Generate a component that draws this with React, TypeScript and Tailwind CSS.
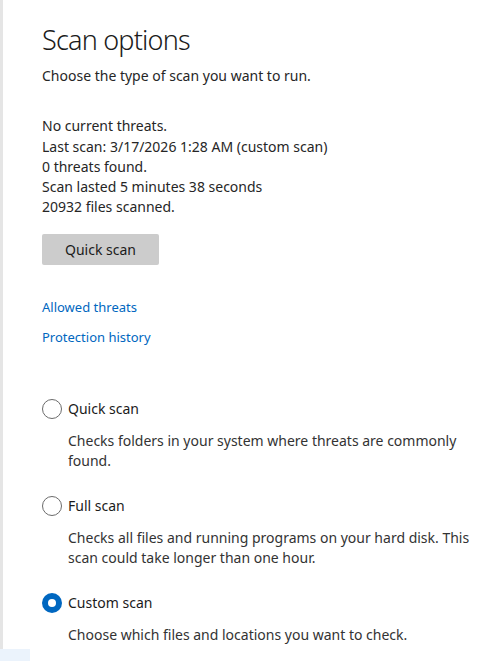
import React from "react";

function Radio({ checked }: { checked?: boolean }) {
  return checked ? (
    <span className="flex h-5 w-5 shrink-0 items-center justify-center rounded-full bg-[#0067c0]">
      <span className="h-2 w-2 rounded-full bg-white" />
    </span>
  ) : (
    <span className="h-5 w-5 shrink-0 rounded-full border border-[#6b6b6b] bg-white" />
  );
}

function Option({ label, desc, checked }: { label: string; desc: string; checked?: boolean }) {
  return (
    <div className="flex flex-col">
      <div className="flex items-center gap-[6px] h-5">
        <Radio checked={checked} />
        <span className="text-[14px] leading-5 text-[#1b1b1b]">{label}</span>
      </div>
      <p className="mt-[12px] pl-[26px] pr-4 text-[14px] leading-5 text-[#333333]">{desc}</p>
    </div>
  );
}

export default function App() {
  return (
    <div
      className="relative h-[661px] w-[500px] overflow-hidden bg-white"
      style={{ fontFamily: '"Noto Sans", "Open Sans", sans-serif' }}
    >
      <div className="absolute left-0 top-0 h-full w-[3px] bg-[#e5e5e5]" />
      <div className="absolute left-0 bottom-0 h-[12px] w-[30px] bg-[#ebf3fc]" />
      <div className="flex flex-col pl-[42px]">
        <h1 className="mt-[22px] text-[27px] font-light leading-9 tracking-[-0.8px] text-[#1b1b1b]">Scan options</h1>
        <p className="mt-[8px] text-[14px] leading-5 text-[#262626]">Choose the type of scan you want to run.</p>
        <div className="mt-[30px] flex flex-col text-[14px] leading-5 text-[#262626]">
          <span className="mb-[1px]">No current threats.</span>
          <span>Last scan: 3/17/2026 1:28 AM (custom scan)</span>
          <span>0 threats found.</span>
          <span>Scan lasted 5 minutes 38 seconds</span>
          <span>20932 files scanned.</span>
        </div>
        <button className="mt-[17px] h-[31px] w-[117px] rounded-[2px] bg-[#cccccc] text-[14px] text-[#1b1b1b]">
          Quick scan
        </button>
        <a className="mt-[32px] text-[13px] leading-5 text-[#0067c0]">Allowed threats</a>
        <a className="mt-[10px] text-[13px] leading-5 text-[#0067c0]">Protection history</a>
        <div className="mt-[52px] flex flex-col gap-[25px]">
          <Option label="Quick scan" desc="Checks folders in your system where threats are commonly found." />
          <Option
            label="Full scan"
            desc="Checks all files and running programs on your hard disk. This scan could take longer than one hour."
          />
          <Option label="Custom scan" desc="Choose which files and locations you want to check." checked />
        </div>
      </div>
    </div>
  );
}
